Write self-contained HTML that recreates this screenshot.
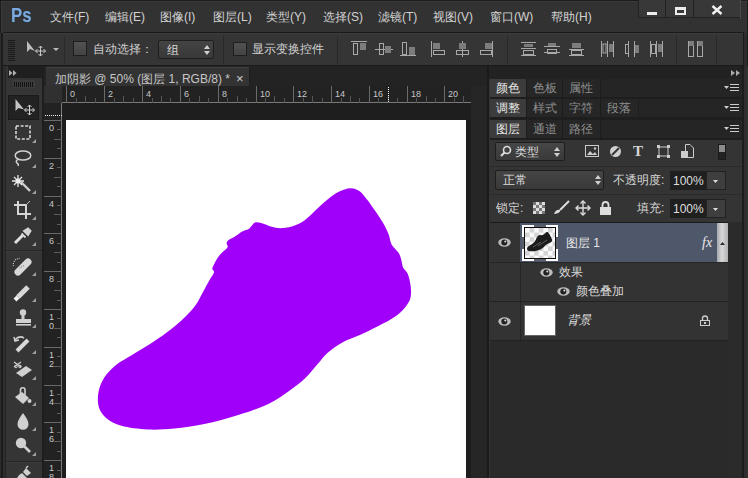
<!DOCTYPE html>
<html><head><meta charset="utf-8">
<style>
*{box-sizing:border-box;margin:0;padding:0}
html,body{width:748px;height:478px;overflow:hidden;background:#2b2b2b}
body{position:relative;font-family:"Liberation Sans",sans-serif;font-size:12px;color:#d0d0d0}
.a{position:absolute}
.t{position:absolute;white-space:nowrap;line-height:1}
.c{display:inline-block;width:12px;text-align:center}
svg{position:absolute;overflow:visible}
</style></head><body>
<div class="a" style="left:0px;top:0px;width:748px;height:33px;background:#323232;"></div>
<div class="a" style="left:0px;top:0px;width:748px;height:1px;background:#1c1c1c;"></div>
<div class="a" style="left:0px;top:0px;width:1px;height:33px;background:#1c1c1c;"></div>
<div class="a" style="left:1px;top:1px;width:746px;height:1px;background:#3a3a3a;"></div>
<div class="a" style="left:1px;top:1px;width:1px;height:32px;background:#3a3a3a;"></div>
<div class="a" style="left:747px;top:0px;width:1px;height:478px;background:#1c1c1c;"></div>
<div class="t" style="left:11px;top:4px;font-size:21px;font-weight:bold;color:#7aaade;transform:scaleX(0.8);transform-origin:0 0;text-shadow:0 0 1px #1d3a5a">Ps</div>
<div class="t" style="left:50px;top:11px;color:#d2d2d2"><span class="c">文</span><span class="c">件</span>(F)</div>
<div class="t" style="left:105px;top:11px;color:#d2d2d2"><span class="c">编</span><span class="c">辑</span>(E)</div>
<div class="t" style="left:160px;top:11px;color:#d2d2d2"><span class="c">图</span><span class="c">像</span>(I)</div>
<div class="t" style="left:213px;top:11px;color:#d2d2d2"><span class="c">图</span><span class="c">层</span>(L)</div>
<div class="t" style="left:266px;top:11px;color:#d2d2d2"><span class="c">类</span><span class="c">型</span>(Y)</div>
<div class="t" style="left:323px;top:11px;color:#d2d2d2"><span class="c">选</span><span class="c">择</span>(S)</div>
<div class="t" style="left:378px;top:11px;color:#d2d2d2"><span class="c">滤</span><span class="c">镜</span>(T)</div>
<div class="t" style="left:433px;top:11px;color:#d2d2d2"><span class="c">视</span><span class="c">图</span>(V)</div>
<div class="t" style="left:490px;top:11px;color:#d2d2d2"><span class="c">窗</span><span class="c">口</span>(W)</div>
<div class="t" style="left:551px;top:11px;color:#d2d2d2"><span class="c">帮</span><span class="c">助</span>(H)</div>
<div class="a" style="left:638px;top:0px;width:103px;height:18px;background:#222222;"></div>
<div class="a" style="left:740px;top:0px;width:1px;height:19px;background:#4a4a4a;"></div>
<div class="a" style="left:639px;top:0px;width:26px;height:17px;background:#383838;"></div>
<div class="a" style="left:666px;top:0px;width:27px;height:17px;background:#383838;"></div>
<div class="a" style="left:694px;top:0px;width:46px;height:17px;background:#383838;"></div>
<div class="a" style="left:647px;top:12px;width:10px;height:3px;background:#ececec;"></div>
<div class="a" style="left:675px;top:7px;width:11px;height:8px;background:transparent;border:2px solid #ececec;border-top-width:3px"></div>
<svg style="left:711px;top:5px" width="12" height="10"><path d="M1.5 1L10.5 9M10.5 1L1.5 9" stroke="#f0f0f0" stroke-width="2.4"/></svg>
<div class="a" style="left:3px;top:32px;width:741px;height:1px;background:#1a1a1a;"></div>
<div class="a" style="left:3px;top:33px;width:741px;height:33px;background:#353535;"></div>
<div class="a" style="left:3px;top:33px;width:741px;height:1px;background:#3c3c3c;"></div>
<div class="a" style="left:3px;top:65px;width:741px;height:1px;background:#1a1a1a;"></div>
<div class="a" style="left:743px;top:32px;width:1px;height:34px;background:#1a1a1a;"></div>
<div class="a" style="left:744px;top:33px;width:3px;height:445px;background:#2c2c2c;"></div>
<div class="a" style="left:3px;top:66px;width:741px;height:1px;background:#2a2a2a;"></div>
<div class="a" style="left:8px;top:40px;width:7px;height:1px;background:#1a1a1a;"></div>
<div class="a" style="left:8px;top:42px;width:7px;height:1px;background:#1a1a1a;"></div>
<div class="a" style="left:8px;top:44px;width:7px;height:1px;background:#1a1a1a;"></div>
<div class="a" style="left:8px;top:46px;width:7px;height:1px;background:#1a1a1a;"></div>
<div class="a" style="left:8px;top:48px;width:7px;height:1px;background:#1a1a1a;"></div>
<div class="a" style="left:8px;top:50px;width:7px;height:1px;background:#1a1a1a;"></div>
<div class="a" style="left:8px;top:52px;width:7px;height:1px;background:#1a1a1a;"></div>
<div class="a" style="left:8px;top:54px;width:7px;height:1px;background:#1a1a1a;"></div>
<div class="a" style="left:8px;top:56px;width:7px;height:1px;background:#1a1a1a;"></div>
<div class="a" style="left:8px;top:58px;width:7px;height:1px;background:#1a1a1a;"></div>
<div class="a" style="left:8px;top:60px;width:7px;height:1px;background:#1a1a1a;"></div>
<svg style="left:26px;top:41px" width="22" height="16"><path d="M1 0L1 11L4 8L9 10Z" fill="#bdbdbd"/><path d="M14.5 5V15M9.5 10H19.5" stroke="#c8c8c8" stroke-width="1"/><path d="M12.5 7L14.5 5L16.5 7M12.5 13L14.5 15L16.5 13M11.5 8L9.5 10L11.5 12M17.5 8L19.5 10L17.5 12" stroke="#c8c8c8" fill="none" stroke-width="1"/></svg>
<svg style="left:53px;top:48px" width="7" height="4"><path d="M0 0H6L3 3Z" fill="#bbb"/></svg>
<div class="a" style="left:64px;top:36px;width:1px;height:28px;background:#2a2a2a;"></div>
<div class="a" style="left:73px;top:41px;width:14px;height:15px;background:#4a4a4a;border:1px solid #1e1e1e;background:linear-gradient(#525252,#444)"></div>
<div class="t" style="left:93px;top:43px;color:#d0d0d0"><span class="c">自</span><span class="c">动</span><span class="c">选</span><span class="c">择</span><span class="c">：</span></div>
<div class="a" style="left:158px;top:40px;width:56px;height:19px;background:#3d3d3d;border:1px solid #1e1e1e;border-radius:2px;background:linear-gradient(#444,#383838)"></div>
<div class="t" style="left:167px;top:44px;color:#d8d8d8"><span class="c">组</span></div>
<svg style="left:204px;top:45px" width="7" height="10"><path d="M0 4L3 0L6 4ZM0 6L3 10L6 6Z" fill="#cfcfcf"/></svg>
<div class="a" style="left:223px;top:36px;width:1px;height:28px;background:#282828;"></div>
<div class="a" style="left:233px;top:42px;width:14px;height:14px;background:#4a4a4a;border:1px solid #1e1e1e;background:linear-gradient(#525252,#444)"></div>
<div class="t" style="left:252px;top:43px;color:#d0d0d0"><span class="c">显</span><span class="c">示</span><span class="c">变</span><span class="c">换</span><span class="c">控</span><span class="c">件</span></div>
<div class="a" style="left:337px;top:36px;width:1px;height:28px;background:#282828;"></div>
<svg style="left:351px;top:41px" width="18" height="16"><path d="M0 0.5H16" stroke="#a8a8a8" fill="none" stroke-width="1"/><rect x="2.5" y="2.5" width="4" height="11" stroke="#a8a8a8" fill="none" stroke-width="1"/><rect x="9" y="2" width="6" height="7" fill="#7c7c7c"/></svg>
<svg style="left:375px;top:41px" width="18" height="16"><path d="M0 8.5H18" stroke="#a8a8a8" fill="none" stroke-width="1"/><rect x="4.5" y="2.5" width="4" height="11" stroke="#a8a8a8" fill="none" stroke-width="1"/><rect x="10" y="5" width="6" height="7" fill="#7c7c7c"/></svg>
<svg style="left:400px;top:41px" width="18" height="16"><path d="M0 14.5H16" stroke="#a8a8a8" fill="none" stroke-width="1"/><rect x="2.5" y="1.5" width="4" height="12" stroke="#a8a8a8" fill="none" stroke-width="1"/><rect x="9" y="6" width="6" height="8" fill="#7c7c7c"/></svg>
<svg style="left:431px;top:41px" width="18" height="16"><path d="M0.5 0V16" stroke="#a8a8a8" fill="none" stroke-width="1"/><rect x="2.5" y="9.5" width="11" height="4" stroke="#a8a8a8" fill="none" stroke-width="1"/><rect x="2" y="2" width="7" height="6" fill="#7c7c7c"/></svg>
<svg style="left:456px;top:41px" width="18" height="16"><path d="M6.5 0V16" stroke="#a8a8a8" fill="none" stroke-width="1"/><rect x="0.5" y="9.5" width="12" height="4" stroke="#a8a8a8" fill="none" stroke-width="1"/><rect x="3" y="2" width="7" height="6" fill="#7c7c7c"/></svg>
<svg style="left:479px;top:41px" width="18" height="16"><path d="M13.5 0V16" stroke="#a8a8a8" fill="none" stroke-width="1"/><rect x="1.5" y="9.5" width="11" height="4" stroke="#a8a8a8" fill="none" stroke-width="1"/><rect x="6" y="2" width="7" height="6" fill="#7c7c7c"/></svg>
<div class="a" style="left:507px;top:36px;width:1px;height:28px;background:#282828;"></div>
<svg style="left:520px;top:41px" width="18" height="16"><path d="M1 1.5H16M1 7.5H16M1 14.5H16" stroke="#a8a8a8" fill="none" stroke-width="1"/><rect x="4" y="3" width="9" height="3" fill="#7c7c7c"/><rect x="3.5" y="9.5" width="10" height="4" stroke="#a8a8a8" fill="none" stroke-width="1"/></svg>
<svg style="left:544px;top:41px" width="18" height="16"><path d="M0 5.5H16M0 11.5H16" stroke="#a8a8a8" fill="none" stroke-width="1"/><rect x="4" y="2" width="8" height="3" fill="#7c7c7c"/><rect x="3.5" y="8.5" width="9" height="4" stroke="#a8a8a8" fill="none" stroke-width="1"/></svg>
<svg style="left:568px;top:41px" width="18" height="16"><path d="M1 8.5H16M1 14.5H16" stroke="#a8a8a8" fill="none" stroke-width="1"/><rect x="4" y="2" width="9" height="5" fill="#7c7c7c"/><rect x="3.5" y="9.5" width="10" height="4" stroke="#a8a8a8" fill="none" stroke-width="1"/></svg>
<svg style="left:600px;top:41px" width="18" height="16"><path d="M1.5 0V16M7.5 0V16M13.5 0V16" stroke="#a8a8a8" fill="none" stroke-width="1"/><rect x="3" y="3" width="3" height="9" stroke="#a8a8a8" fill="none" stroke-width="1"/><rect x="9" y="3" width="4" height="8" fill="#7c7c7c"/></svg>
<svg style="left:624px;top:41px" width="18" height="16"><path d="M4.5 0V16M10.5 0V16" stroke="#a8a8a8" fill="none" stroke-width="1"/><rect x="1.5" y="3.5" width="3" height="9" stroke="#a8a8a8" fill="none" stroke-width="1"/><rect x="11" y="4" width="4" height="8" fill="#7c7c7c"/></svg>
<svg style="left:649px;top:41px" width="18" height="16"><path d="M1.5 0V16M7.5 0V16M13.5 0V16" stroke="#a8a8a8" fill="none" stroke-width="1"/><rect x="2.5" y="3.5" width="4" height="9" stroke="#a8a8a8" fill="none" stroke-width="1"/><rect x="9" y="3" width="4" height="8" fill="#7c7c7c"/></svg>
<div class="a" style="left:676px;top:36px;width:1px;height:28px;background:#282828;"></div>
<svg style="left:687px;top:40px" width="18" height="18"><rect x="1.5" y="1.5" width="5" height="15" stroke="#a8a8a8" fill="none" stroke-width="1"/><rect x="10.5" y="1.5" width="5" height="15" stroke="#a8a8a8" fill="none" stroke-width="1"/><rect x="2" y="1" width="5" height="5" fill="#7c7c7c"/><rect x="11" y="1" width="5" height="5" fill="#7c7c7c"/></svg>
<div class="a" style="left:716px;top:36px;width:1px;height:28px;background:#282828;"></div>
<div class="a" style="left:0px;top:33px;width:2px;height:445px;background:#2c2c2c;"></div>
<div class="a" style="left:1px;top:33px;width:2px;height:445px;background:#1c1c1c;"></div>
<div class="a" style="left:3px;top:66px;width:3px;height:412px;background:#2e2e2e;"></div>
<div class="a" style="left:5px;top:66px;width:1px;height:412px;background:#262626;"></div>
<div class="a" style="left:6px;top:66px;width:36px;height:412px;background:#353535;"></div>
<div class="a" style="left:42px;top:66px;width:2px;height:412px;background:#1e1e1e;"></div>
<div class="a" style="left:8px;top:66px;width:34px;height:12px;background:#1f1f1f;"></div>
<svg style="left:9px;top:70px" width="8" height="6"><path d="M0 0L3.5 3L0 6ZM4 0L7.5 3L4 6Z" fill="#b0b0b0"/></svg>
<div class="a" style="left:13px;top:80px;width:22px;height:8px;background:#3b3b3b;"></div>
<div class="a" style="left:14px;top:82px;width:1px;height:5px;background:#141414;"></div>
<div class="a" style="left:16px;top:82px;width:1px;height:5px;background:#141414;"></div>
<div class="a" style="left:18px;top:82px;width:1px;height:5px;background:#141414;"></div>
<div class="a" style="left:20px;top:82px;width:1px;height:5px;background:#141414;"></div>
<div class="a" style="left:22px;top:82px;width:1px;height:5px;background:#141414;"></div>
<div class="a" style="left:24px;top:82px;width:1px;height:5px;background:#141414;"></div>
<div class="a" style="left:26px;top:82px;width:1px;height:5px;background:#141414;"></div>
<div class="a" style="left:28px;top:82px;width:1px;height:5px;background:#141414;"></div>
<div class="a" style="left:30px;top:82px;width:1px;height:5px;background:#141414;"></div>
<div class="a" style="left:32px;top:82px;width:1px;height:5px;background:#141414;"></div>
<div class="a" style="left:8px;top:95px;width:31px;height:25px;background:#222222;border:1px solid #1a1a1a"></div>
<svg style="left:15px;top:99px" width="22" height="17"><path d="M0.5 0L0.5 12L3.5 9L9 10.5Z" fill="#c4c4c4"/><path d="M14.5 6V16M9.5 11H19.5M12.5 8L14.5 6L16.5 8M12.5 14L14.5 16L16.5 14M11.5 9L9.5 11L11.5 13M17.5 9L19.5 11L17.5 13" stroke="#d0d0d0" fill="none" stroke-width="1"/></svg>
<svg style="left:12px;top:124px" width="20" height="18"><rect x="4" y="2" width="14" height="13" stroke="#d8d8d8" fill="none" stroke-width="1.6" stroke-dasharray="3 1.6"/></svg>
<svg style="left:32px;top:139px" width="4" height="4"><path d="M4 0V4H0Z" fill="#a0a0a0"/></svg>
<svg style="left:12px;top:149px" width="20" height="18"><ellipse cx="11" cy="6.5" rx="7.8" ry="4.6" stroke="#d0d0d0" fill="none" stroke-width="1.5"/><path d="M6 10.5Q3 12 5 14Q7 15 6 17" stroke="#d0d0d0" fill="none" stroke-width="1.5"/></svg>
<svg style="left:32px;top:164px" width="4" height="4"><path d="M4 0V4H0Z" fill="#a0a0a0"/></svg>
<svg style="left:12px;top:175px" width="20" height="18"><path d="M9 7L18 16" stroke="#d0d0d0" stroke-width="2.4"/><path d="M6 0V12M0 6H12M2 2L10 10M10 2L2 10" stroke="#e6e6e6" stroke-width="1.3"/><circle cx="6" cy="6" r="2.5" fill="#eee"/></svg>
<svg style="left:32px;top:190px" width="4" height="4"><path d="M4 0V4H0Z" fill="#a0a0a0"/></svg>
<svg style="left:12px;top:201px" width="20" height="18"><path d="M6 0V13H19M2 4H14V18" stroke="#d4d4d4" fill="none" stroke-width="2"/><path d="M14 4L18 0" stroke="#bbb" stroke-width="1"/></svg>
<svg style="left:32px;top:216px" width="4" height="4"><path d="M4 0V4H0Z" fill="#a0a0a0"/></svg>
<svg style="left:12px;top:227px" width="20" height="18"><path d="M3 16L11 8" stroke="#e0e0e0" stroke-width="3"/><path d="M9.5 6.5L13.5 10.5M12 4L16 1.5L18.5 4L16 8Z" fill="#d4d4d4" stroke="#d4d4d4" stroke-width="2"/></svg>
<svg style="left:32px;top:242px" width="4" height="4"><path d="M4 0V4H0Z" fill="#a0a0a0"/></svg>
<div class="a" style="left:6px;top:250px;width:36px;height:1px;background:#262626;"></div>
<div class="a" style="left:6px;top:251px;width:36px;height:1px;background:#3a3a3a;"></div>
<svg style="left:12px;top:257px" width="20" height="18"><path d="M6 15L16 5" stroke="#d8d8d8" stroke-width="7" stroke-linecap="round"/><path d="M7.5 11L12.5 8" stroke="#888" stroke-width="1.2" stroke-dasharray="1 1"/><path d="M1.5 9A6 6 0 0 1 8 1.5" stroke="#c8c8c8" stroke-dasharray="1 1.2" fill="none" stroke-width="1.2"/></svg>
<svg style="left:32px;top:272px" width="4" height="4"><path d="M4 0V4H0Z" fill="#a0a0a0"/></svg>
<svg style="left:12px;top:283px" width="20" height="18"><path d="M6 14L16 4" stroke="#d8d8d8" stroke-width="5"/><path d="M3 17L6 14" stroke="#f0f0f0" stroke-width="4"/></svg>
<svg style="left:32px;top:298px" width="4" height="4"><path d="M4 0V4H0Z" fill="#a0a0a0"/></svg>
<svg style="left:12px;top:309px" width="20" height="18"><circle cx="11" cy="3.5" r="3.2" fill="#d0d0d0"/><rect x="9.5" y="5" width="3" height="6" fill="#d0d0d0"/><rect x="4" y="10" width="15" height="4" fill="#d0d0d0"/><rect x="4" y="15" width="15" height="1.6" fill="#d0d0d0"/></svg>
<svg style="left:32px;top:324px" width="4" height="4"><path d="M4 0V4H0Z" fill="#a0a0a0"/></svg>
<svg style="left:12px;top:335px" width="20" height="18"><path d="M5 16L16 5" stroke="#d8d8d8" stroke-width="4"/><path d="M3 5Q7 0 12 3" stroke="#d0d0d0" fill="none" stroke-width="1.5"/><path d="M2 2L3 6L7 5" stroke="#d0d0d0" fill="none" stroke-width="1.5" stroke-width="1.2"/></svg>
<svg style="left:32px;top:350px" width="4" height="4"><path d="M4 0V4H0Z" fill="#a0a0a0"/></svg>
<svg style="left:12px;top:361px" width="20" height="18"><path d="M4 12L14 5L20 9L10 16Z" fill="#d0d0d0"/><path d="M2 1L9 6M2 6L9 1" stroke="#d0d0d0" stroke-width="1.3"/><circle cx="4" cy="5.5" r="1.3" stroke="#d0d0d0" fill="none"/><circle cx="8" cy="5.5" r="1.3" stroke="#d0d0d0" fill="none"/></svg>
<svg style="left:32px;top:376px" width="4" height="4"><path d="M4 0V4H0Z" fill="#a0a0a0"/></svg>
<svg style="left:12px;top:387px" width="20" height="18"><path d="M3 10L10 5L17 11L11 17Z" fill="#d0d0d0"/><path d="M8.5 7V3A2.2 2.2 0 0 1 13 3V8" stroke="#d0d0d0" fill="none" stroke-width="1.6"/><circle cx="17.5" cy="14" r="2" fill="#d0d0d0"/></svg>
<svg style="left:32px;top:402px" width="4" height="4"><path d="M4 0V4H0Z" fill="#a0a0a0"/></svg>
<svg style="left:12px;top:412px" width="20" height="18"><path d="M11 1Q5 9 5.5 12.5A5.5 5.2 0 0 0 16.5 12.5Q17 9 11 1Z" fill="#d0d0d0"/></svg>
<svg style="left:32px;top:427px" width="4" height="4"><path d="M4 0V4H0Z" fill="#a0a0a0"/></svg>
<svg style="left:12px;top:437px" width="20" height="18"><circle cx="9" cy="6" r="5.2" fill="#d0d0d0"/><path d="M12 9L18 15" stroke="#d0d0d0" stroke-width="2.6"/></svg>
<svg style="left:32px;top:452px" width="4" height="4"><path d="M4 0V4H0Z" fill="#a0a0a0"/></svg>
<div class="a" style="left:6px;top:461px;width:36px;height:1px;background:#262626;"></div>
<div class="a" style="left:6px;top:462px;width:36px;height:1px;background:#3a3a3a;"></div>
<svg style="left:12px;top:465px" width="20" height="18"><path d="M4 18Q4 11 10 8L15 13Q12 18 8 18Z" fill="#d0d0d0"/><path d="M11 7L14 3L19 8L15 11Z" fill="#d0d0d0"/><path d="M14 3L16 1" stroke="#d0d0d0" stroke-width="1.5"/></svg>
<svg style="left:32px;top:480px" width="4" height="4"><path d="M4 0V4H0Z" fill="#a0a0a0"/></svg>
<div class="a" style="left:44px;top:66px;width:445px;height:20px;background:#232323;"></div>
<div class="a" style="left:46px;top:67px;width:203px;height:19px;background:#333333;"></div>
<div class="a" style="left:46px;top:67px;width:203px;height:1px;background:#404040;"></div>
<div class="a" style="left:249px;top:67px;width:1px;height:19px;background:#1e1e1e;"></div>
<div class="t" style="left:55px;top:73px;color:#c6c6c6"><span class="c">加</span><span class="c">阴</span><span class="c">影</span> @ 50% (<span class="c">图</span><span class="c">层</span> 1, RGB/8) *</div>
<div class="t" style="left:236px;top:72px;color:#cfcfcf;font-size:13px">×</div>
<div class="a" style="left:44px;top:86px;width:427px;height:17px;background:#222222;"></div>
<div class="a" style="left:44px;top:103px;width:18px;height:375px;background:#222222;"></div>
<div class="a" style="left:44px;top:86px;width:18px;height:17px;background:#303030;"></div>
<svg style="left:0;top:0" width="748" height="478"><path d="M62 102.5H471" stroke="#7a7a7a"/><path d="M66.5 86V103" stroke="#6a6a6a"/><path d="M76.5 98V103" stroke="#555"/><path d="M85.5 96V103" stroke="#555"/><path d="M95.5 98V103" stroke="#555"/><text x="70" y="97" fill="#c8c8c8" font-size="9" font-family="Liberation Sans">0</text><path d="M104.5 86V103" stroke="#6a6a6a"/><path d="M114.5 98V103" stroke="#555"/><path d="M123.5 96V103" stroke="#555"/><path d="M133.5 98V103" stroke="#555"/><text x="108" y="97" fill="#c8c8c8" font-size="9" font-family="Liberation Sans">2</text><path d="M142.5 86V103" stroke="#6a6a6a"/><path d="M152.5 98V103" stroke="#555"/><path d="M161.5 96V103" stroke="#555"/><path d="M170.5 98V103" stroke="#555"/><text x="146" y="97" fill="#c8c8c8" font-size="9" font-family="Liberation Sans">4</text><path d="M180.5 86V103" stroke="#6a6a6a"/><path d="M189.5 98V103" stroke="#555"/><path d="M199.5 96V103" stroke="#555"/><path d="M208.5 98V103" stroke="#555"/><text x="184" y="97" fill="#c8c8c8" font-size="9" font-family="Liberation Sans">6</text><path d="M218.5 86V103" stroke="#6a6a6a"/><path d="M227.5 98V103" stroke="#555"/><path d="M237.5 96V103" stroke="#555"/><path d="M246.5 98V103" stroke="#555"/><text x="222" y="97" fill="#c8c8c8" font-size="9" font-family="Liberation Sans">8</text><path d="M256.5 86V103" stroke="#6a6a6a"/><path d="M265.5 98V103" stroke="#555"/><path d="M274.5 96V103" stroke="#555"/><path d="M284.5 98V103" stroke="#555"/><text x="260" y="97" fill="#c8c8c8" font-size="9" font-family="Liberation Sans">10</text><path d="M293.5 86V103" stroke="#6a6a6a"/><path d="M303.5 98V103" stroke="#555"/><path d="M312.5 96V103" stroke="#555"/><path d="M322.5 98V103" stroke="#555"/><text x="297" y="97" fill="#c8c8c8" font-size="9" font-family="Liberation Sans">12</text><path d="M331.5 86V103" stroke="#6a6a6a"/><path d="M341.5 98V103" stroke="#555"/><path d="M350.5 96V103" stroke="#555"/><path d="M359.5 98V103" stroke="#555"/><text x="335" y="97" fill="#c8c8c8" font-size="9" font-family="Liberation Sans">14</text><path d="M369.5 86V103" stroke="#6a6a6a"/><path d="M378.5 98V103" stroke="#555"/><path d="M388.5 96V103" stroke="#555"/><path d="M397.5 98V103" stroke="#555"/><text x="373" y="97" fill="#c8c8c8" font-size="9" font-family="Liberation Sans">16</text><path d="M407.5 86V103" stroke="#6a6a6a"/><path d="M416.5 98V103" stroke="#555"/><path d="M426.5 96V103" stroke="#555"/><path d="M435.5 98V103" stroke="#555"/><text x="411" y="97" fill="#c8c8c8" font-size="9" font-family="Liberation Sans">18</text><path d="M444.5 86V103" stroke="#6a6a6a"/><path d="M454.5 98V103" stroke="#555"/><path d="M463.5 96V103" stroke="#555"/><text x="448" y="97" fill="#c8c8c8" font-size="9" font-family="Liberation Sans">20</text><path d="M388.5 87V103" stroke="#eee" stroke-dasharray="1 1"/><path d="M61.5 103V478" stroke="#7a7a7a"/><path d="M44 120.5H62" stroke="#6a6a6a"/><path d="M57 129.5H62" stroke="#5c5c5c"/><path d="M54 139.5H62" stroke="#5c5c5c"/><path d="M57 148.5H62" stroke="#5c5c5c"/><text x="49" y="131" fill="#c8c8c8" font-size="9" font-family="Liberation Sans">0</text><path d="M44 158.5H62" stroke="#6a6a6a"/><path d="M57 167.5H62" stroke="#5c5c5c"/><path d="M54 177.5H62" stroke="#5c5c5c"/><path d="M57 186.5H62" stroke="#5c5c5c"/><text x="49" y="169" fill="#c8c8c8" font-size="9" font-family="Liberation Sans">2</text><path d="M44 196.5H62" stroke="#6a6a6a"/><path d="M57 205.5H62" stroke="#5c5c5c"/><path d="M54 214.5H62" stroke="#5c5c5c"/><path d="M57 224.5H62" stroke="#5c5c5c"/><text x="49" y="207" fill="#c8c8c8" font-size="9" font-family="Liberation Sans">4</text><path d="M44 233.5H62" stroke="#6a6a6a"/><path d="M57 243.5H62" stroke="#5c5c5c"/><path d="M54 252.5H62" stroke="#5c5c5c"/><path d="M57 262.5H62" stroke="#5c5c5c"/><text x="49" y="244" fill="#c8c8c8" font-size="9" font-family="Liberation Sans">6</text><path d="M44 271.5H62" stroke="#6a6a6a"/><path d="M57 281.5H62" stroke="#5c5c5c"/><path d="M54 290.5H62" stroke="#5c5c5c"/><path d="M57 300.5H62" stroke="#5c5c5c"/><text x="49" y="282" fill="#c8c8c8" font-size="9" font-family="Liberation Sans">8</text><path d="M44 309.5H62" stroke="#6a6a6a"/><path d="M57 318.5H62" stroke="#5c5c5c"/><path d="M54 328.5H62" stroke="#5c5c5c"/><path d="M57 337.5H62" stroke="#5c5c5c"/><text x="49" y="320" fill="#c8c8c8" font-size="9" font-family="Liberation Sans">1</text><text x="49" y="329" fill="#c8c8c8" font-size="9" font-family="Liberation Sans">0</text><path d="M44 347.5H62" stroke="#6a6a6a"/><path d="M57 356.5H62" stroke="#5c5c5c"/><path d="M54 366.5H62" stroke="#5c5c5c"/><path d="M57 375.5H62" stroke="#5c5c5c"/><text x="49" y="358" fill="#c8c8c8" font-size="9" font-family="Liberation Sans">1</text><text x="49" y="367" fill="#c8c8c8" font-size="9" font-family="Liberation Sans">2</text><path d="M44 385.5H62" stroke="#6a6a6a"/><path d="M57 394.5H62" stroke="#5c5c5c"/><path d="M54 403.5H62" stroke="#5c5c5c"/><path d="M57 413.5H62" stroke="#5c5c5c"/><text x="49" y="396" fill="#c8c8c8" font-size="9" font-family="Liberation Sans">1</text><text x="49" y="405" fill="#c8c8c8" font-size="9" font-family="Liberation Sans">4</text><path d="M44 422.5H62" stroke="#6a6a6a"/><path d="M57 432.5H62" stroke="#5c5c5c"/><path d="M54 441.5H62" stroke="#5c5c5c"/><path d="M57 451.5H62" stroke="#5c5c5c"/><text x="49" y="433" fill="#c8c8c8" font-size="9" font-family="Liberation Sans">1</text><text x="49" y="442" fill="#c8c8c8" font-size="9" font-family="Liberation Sans">6</text><path d="M44 460.5H62" stroke="#6a6a6a"/><path d="M57 470.5H62" stroke="#5c5c5c"/><path d="M54 479.5H62" stroke="#5c5c5c"/><path d="M57 489.5H62" stroke="#5c5c5c"/><text x="49" y="471" fill="#c8c8c8" font-size="9" font-family="Liberation Sans">1</text><text x="49" y="480" fill="#c8c8c8" font-size="9" font-family="Liberation Sans">8</text><path d="M45 115.5H62" stroke="#eee" stroke-dasharray="1 1"/></svg>
<div class="a" style="left:62px;top:103px;width:409px;height:375px;background:#1e1e1e;"></div>
<div class="a" style="left:66px;top:120px;width:400px;height:358px;background:#ffffff;"></div>
<svg style="left:0;top:0" width="748" height="478"><defs><filter id="bl" x="-5%" y="-5%" width="110%" height="110%"><feGaussianBlur stdDeviation="0.7"/></filter></defs><path fill="#a000f9" filter="url(#bl)" d="M98.8 406.9 C97.5 402.5 97.6 396.8 98.5 392.0 C99.4 387.2 101.1 382.5 104.0 378.0 C106.9 373.5 111.3 368.8 116.0 365.0 C120.7 361.2 126.3 358.5 132.0 355.0 C137.7 351.5 144.3 347.7 150.0 344.0 C155.7 340.3 160.7 337.0 166.0 333.0 C171.3 329.0 177.2 324.5 182.0 320.0 C186.8 315.5 191.5 310.7 195.0 306.0 C198.5 301.3 200.7 296.2 203.0 292.0 C205.3 287.8 207.2 284.2 209.0 281.0 C210.8 277.8 213.4 274.5 214.0 272.5 C214.6 270.5 212.4 270.2 212.3 269.0 C212.2 267.8 212.7 267.2 213.5 265.5 C214.3 263.8 215.9 260.6 217.2 258.6 C218.5 256.6 219.7 255.2 221.4 253.3 C223.1 251.5 226.6 249.2 227.5 247.5 C228.4 245.8 226.3 244.3 226.6 243.0 C226.8 241.7 227.6 240.8 229.0 239.7 C230.4 238.6 232.8 237.8 235.0 236.4 C237.2 235.0 240.0 232.6 242.3 231.4 C244.6 230.2 247.0 230.0 248.6 229.0 C250.2 228.0 250.9 226.6 252.0 225.5 C253.1 224.4 253.5 223.0 255.0 222.6 C256.5 222.2 258.3 222.3 261.1 223.0 C263.9 223.7 268.5 225.9 271.6 226.8 C274.8 227.7 276.6 228.2 280.0 228.2 C283.4 228.1 287.8 227.9 292.0 226.5 C296.2 225.1 300.7 223.1 305.0 220.0 C309.3 216.9 313.8 211.7 318.0 208.0 C322.2 204.3 326.5 200.3 330.0 197.6 C333.5 194.9 335.4 193.3 338.8 191.7 C342.2 190.1 347.1 188.3 350.5 188.2 C353.9 188.1 356.6 189.3 359.3 191.1 C362.0 192.9 364.2 196.0 366.6 199.0 C369.1 202.0 371.3 205.4 374.0 209.3 C376.7 213.2 380.4 218.3 382.8 222.5 C385.2 226.7 387.1 230.5 388.6 234.2 C390.1 237.9 389.9 241.3 391.6 244.5 C393.3 247.7 397.2 250.4 398.9 253.3 C400.6 256.2 401.1 259.6 401.8 262.0 C402.5 264.4 402.3 266.0 403.3 268.0 C404.3 270.0 406.5 270.9 407.7 273.8 C408.9 276.7 410.1 281.6 410.6 285.5 C411.1 289.4 411.3 293.9 410.6 297.3 C409.9 300.7 408.4 303.1 406.2 306.0 C404.0 308.9 401.2 312.0 397.4 314.9 C393.6 317.8 389.5 320.1 383.5 323.3 C377.5 326.5 368.4 331.2 361.6 334.3 C354.8 337.4 348.6 339.1 342.8 342.2 C337.1 345.3 331.3 349.5 327.1 353.2 C322.9 356.9 321.4 359.9 317.7 364.1 C314.0 368.3 309.8 373.9 305.1 378.3 C300.4 382.8 295.5 386.5 289.4 390.8 C283.3 395.1 276.9 400.0 268.4 404.0 C259.9 408.0 248.9 411.7 238.2 415.0 C227.5 418.3 215.0 421.8 204.3 424.0 C193.6 426.2 183.6 427.6 174.2 428.5 C164.8 429.4 156.6 429.9 147.8 429.5 C139.0 429.1 128.3 427.7 121.4 425.8 C114.5 423.9 110.2 421.4 106.4 418.2 C102.6 415.0 100.1 411.3 98.8 406.9Z"/></svg>
<div class="a" style="left:471px;top:86px;width:18px;height:392px;background:#262626;"></div>
<div class="a" style="left:487px;top:66px;width:2px;height:412px;background:#1a1a1a;"></div>
<div class="a" style="left:489px;top:66px;width:259px;height:412px;background:#343434;"></div>
<div class="a" style="left:489px;top:66px;width:254px;height:13px;background:#222;"></div>
<svg style="left:731px;top:70px" width="9" height="6"><path d="M0 0L4 3L0 6ZM5 0L9 3L5 6Z" fill="#aaa"/></svg>
<div class="a" style="left:490px;top:79px;width:253px;height:18px;background:#252525;"></div>
<div class="a" style="left:490px;top:79px;width:36px;height:18px;background:#3c3c3c;"></div>
<div class="t" style="left:496px;top:82px;color:#e6e6e6"><span class="c">颜</span><span class="c">色</span></div>
<div class="a" style="left:526px;top:79px;width:1px;height:18px;background:#1c1c1c;"></div>
<div class="a" style="left:527px;top:79px;width:35px;height:18px;background:#262626;"></div>
<div class="t" style="left:533px;top:82px;color:#8e8e8e"><span class="c">色</span><span class="c">板</span></div>
<div class="a" style="left:562px;top:79px;width:1px;height:18px;background:#1c1c1c;"></div>
<div class="a" style="left:563px;top:79px;width:37px;height:18px;background:#262626;"></div>
<div class="t" style="left:569px;top:82px;color:#8e8e8e"><span class="c">属</span><span class="c">性</span></div>
<div class="a" style="left:600px;top:79px;width:1px;height:18px;background:#1c1c1c;"></div>
<svg style="left:724px;top:84px" width="16" height="8"><path d="M0 2H5L2.5 5Z" fill="#ccc"/><path d="M6 0.5H15M6 3.5H15M6 6.5H15" stroke="#ccc"/></svg>
<div class="a" style="left:490px;top:97px;width:253px;height:2px;background:#1e1e1e;"></div>
<div class="a" style="left:490px;top:99px;width:253px;height:18px;background:#252525;"></div>
<div class="a" style="left:490px;top:99px;width:36px;height:18px;background:#3c3c3c;"></div>
<div class="t" style="left:496px;top:102px;color:#e6e6e6"><span class="c">调</span><span class="c">整</span></div>
<div class="a" style="left:526px;top:99px;width:1px;height:18px;background:#1c1c1c;"></div>
<div class="a" style="left:527px;top:99px;width:35px;height:18px;background:#262626;"></div>
<div class="t" style="left:533px;top:102px;color:#8e8e8e"><span class="c">样</span><span class="c">式</span></div>
<div class="a" style="left:562px;top:99px;width:1px;height:18px;background:#1c1c1c;"></div>
<div class="a" style="left:563px;top:99px;width:37px;height:18px;background:#262626;"></div>
<div class="t" style="left:569px;top:102px;color:#8e8e8e"><span class="c">字</span><span class="c">符</span></div>
<div class="a" style="left:600px;top:99px;width:1px;height:18px;background:#1c1c1c;"></div>
<div class="a" style="left:601px;top:99px;width:37px;height:18px;background:#262626;"></div>
<div class="t" style="left:607px;top:102px;color:#8e8e8e"><span class="c">段</span><span class="c">落</span></div>
<div class="a" style="left:638px;top:99px;width:1px;height:18px;background:#1c1c1c;"></div>
<svg style="left:724px;top:104px" width="16" height="8"><path d="M0 2H5L2.5 5Z" fill="#ccc"/><path d="M6 0.5H15M6 3.5H15M6 6.5H15" stroke="#ccc"/></svg>
<div class="a" style="left:490px;top:117px;width:253px;height:3px;background:#1e1e1e;"></div>
<div class="a" style="left:490px;top:120px;width:253px;height:18px;background:#252525;"></div>
<div class="a" style="left:490px;top:120px;width:36px;height:18px;background:#3c3c3c;"></div>
<div class="t" style="left:496px;top:123px;color:#e6e6e6"><span class="c">图</span><span class="c">层</span></div>
<div class="a" style="left:526px;top:120px;width:1px;height:18px;background:#1c1c1c;"></div>
<div class="a" style="left:527px;top:120px;width:35px;height:18px;background:#262626;"></div>
<div class="t" style="left:533px;top:123px;color:#8e8e8e"><span class="c">通</span><span class="c">道</span></div>
<div class="a" style="left:562px;top:120px;width:1px;height:18px;background:#1c1c1c;"></div>
<div class="a" style="left:563px;top:120px;width:37px;height:18px;background:#262626;"></div>
<div class="t" style="left:569px;top:123px;color:#8e8e8e"><span class="c">路</span><span class="c">径</span></div>
<div class="a" style="left:600px;top:120px;width:1px;height:18px;background:#1c1c1c;"></div>
<svg style="left:724px;top:125px" width="16" height="8"><path d="M0 2H5L2.5 5Z" fill="#ccc"/><path d="M6 0.5H15M6 3.5H15M6 6.5H15" stroke="#ccc"/></svg>
<div class="a" style="left:490px;top:138px;width:253px;height:2px;background:#1e1e1e;"></div>
<div class="a" style="left:490px;top:140px;width:253px;height:26px;background:#343434;"></div>
<div class="a" style="left:495px;top:142px;width:70px;height:19px;background:#3e3e3e;border:1px solid #1e1e1e;border-radius:2px;background:linear-gradient(#474747,#393939)"></div>
<svg style="left:500px;top:145px" width="12" height="12"><circle cx="7" cy="5" r="3.5" stroke="#ddd" stroke-width="1.6" fill="none"/><path d="M4.5 7.5L1 11" stroke="#ddd" stroke-width="2"/></svg>
<div class="t" style="left:515px;top:146px;color:#dcdcdc"><span class="c">类</span><span class="c">型</span></div>
<svg style="left:554px;top:147px" width="7" height="10"><path d="M0 4L3 0L6 4ZM0 6L3 10L6 6Z" fill="#cfcfcf"/></svg>
<svg style="left:585px;top:145px" width="14" height="12"><rect x="0.5" y="0.5" width="13" height="11" stroke="#ccc" fill="none"/><path d="M2 10L5 6L8 9L10 7L12 10Z" fill="#ccc"/><circle cx="10" cy="3.5" r="1.2" fill="#ccc"/></svg>
<svg style="left:609px;top:145px" width="13" height="13"><circle cx="6.5" cy="6.5" r="5.5" fill="#cfcfcf"/><path d="M3 10L10 3" stroke="#333" stroke-width="2"/></svg>
<div class="t" style="left:633px;top:144px;font-family:Liberation Serif;font-size:15px;font-weight:bold;color:#d5d5d5">T</div>
<svg style="left:657px;top:145px" width="13" height="13"><rect x="2" y="2" width="9" height="9" stroke="#ccc" fill="none"/><rect x="0" y="0" width="3" height="3" fill="#ccc"/><rect x="10" y="0" width="3" height="3" fill="#ccc"/><rect x="0" y="10" width="3" height="3" fill="#ccc"/><rect x="10" y="10" width="3" height="3" fill="#ccc"/></svg>
<svg style="left:681px;top:144px" width="13" height="14"><path d="M4.5 0.5H9L12.5 4V13.5H4.5Z" stroke="#ccc" fill="none"/><rect x="0" y="7" width="7" height="7" fill="#ccc"/></svg>
<div class="a" style="left:718px;top:144px;width:8px;height:16px;background:#222;border:1px solid #1a1a1a"></div>
<div class="a" style="left:719px;top:145px;width:6px;height:7px;background:#8a8a8a;"></div>
<div class="a" style="left:490px;top:166px;width:253px;height:1px;background:#2a2a2a;"></div>
<div class="a" style="left:495px;top:170px;width:109px;height:20px;background:#3e3e3e;border:1px solid #1e1e1e;border-radius:2px;background:linear-gradient(#454545,#393939)"></div>
<div class="t" style="left:503px;top:174px;color:#dcdcdc"><span class="c">正</span><span class="c">常</span></div>
<svg style="left:595px;top:175px" width="7" height="10"><path d="M0 4L3 0L6 4ZM0 6L3 10L6 6Z" fill="#cfcfcf"/></svg>
<div class="t" style="left:613px;top:174px;color:#d6d6d6"><span class="c">不</span><span class="c">透</span><span class="c">明</span><span class="c">度</span>:</div>
<div class="a" style="left:670px;top:171px;width:36px;height:19px;background:#1f1f1f;"></div>
<div class="t" style="left:673px;top:175px;color:#dedede">100%</div>
<div class="a" style="left:706px;top:171px;width:20px;height:19px;background:#3e3e3e;border:1px solid #222"></div>
<svg style="left:713px;top:180px" width="5" height="3"><path d="M0 0H5L2.5 3Z" fill="#ddd"/></svg>
<div class="a" style="left:490px;top:194px;width:253px;height:1px;background:#2a2a2a;"></div>
<div class="t" style="left:496px;top:202px;color:#d6d6d6"><span class="c">锁</span><span class="c">定</span>:</div>
<svg style="left:533px;top:202px" width="12" height="12"><rect width="12" height="12" fill="#ddd"/><path d="M0 0h3v3H0zM6 0h3v3H6zM3 3h3v3H3zM9 3h3v3H9zM0 6h3v3H0zM6 6h3v3H6zM3 9h3v3H3zM9 9h3v3H9z" fill="#777"/></svg>
<svg style="left:553px;top:201px" width="17" height="14"><path d="M16 0L7 9" stroke="#ddd" stroke-width="2"/><path d="M1 13Q3 8 7 9Q8 12 1 13Z" fill="#ddd"/></svg>
<svg style="left:576px;top:201px" width="14" height="14"><path d="M7 0V14M0 7H14" stroke="#ddd" stroke-width="1.4"/><path d="M4.5 2.5L7 0L9.5 2.5M4.5 11.5L7 14L9.5 11.5M2.5 4.5L0 7L2.5 9.5M11.5 4.5L14 7L11.5 9.5" stroke="#ddd" fill="none" stroke-width="1.4"/></svg>
<svg style="left:600px;top:201px" width="11" height="14"><path d="M2.5 6V4A3 3 0 0 1 8.5 4V6" stroke="#ddd" stroke-width="1.8" fill="none"/><rect x="0" y="6" width="11" height="8" fill="#ddd"/></svg>
<div class="t" style="left:637px;top:202px;color:#d6d6d6"><span class="c">填</span><span class="c">充</span>:</div>
<div class="a" style="left:670px;top:199px;width:36px;height:19px;background:#1f1f1f;"></div>
<div class="t" style="left:673px;top:203px;color:#dedede">100%</div>
<div class="a" style="left:706px;top:199px;width:20px;height:19px;background:#3e3e3e;border:1px solid #222"></div>
<svg style="left:713px;top:208px" width="5" height="3"><path d="M0 0H5L2.5 3Z" fill="#ddd"/></svg>
<div class="a" style="left:490px;top:222px;width:238px;height:256px;background:#2a2a2a;"></div>
<div class="a" style="left:490px;top:222px;width:238px;height:1px;background:#1c1c1c;"></div>
<div class="a" style="left:490px;top:223px;width:30px;height:39px;background:#333333;"></div>
<div class="a" style="left:520px;top:223px;width:208px;height:39px;background:#4f576a;"></div>
<div class="a" style="left:717px;top:223px;width:11px;height:39px;background:#bdbdbd;background:linear-gradient(90deg,#a4a8b0,#d8d8d8 45%,#b0b0b4)"></div>
<svg style="left:720px;top:242px" width="5" height="3"><path d="M0 3L2.5 0L5 3Z" fill="#2a2a2a"/></svg>
<div class="t" style="left:702px;top:236px;font-style:italic;font-family:Liberation Serif;font-size:14px;color:#e8e8e8">fx</div>
<svg style="left:498px;top:238px" width="13" height="9"><ellipse cx="6.5" cy="4.5" rx="6.2" ry="4.2" fill="#bdbdbd"/><circle cx="6.3" cy="4.5" r="3" fill="#222"/><circle cx="7.3" cy="3.4" r="1" fill="#e0e0e0"/></svg>
<div class="a" style="left:522px;top:225px;width:36px;height:36px;background:#5a5f6a;"></div>
<div class="a" style="left:522px;top:225px;width:12px;height:2px;background:#ffffff;"></div>
<div class="a" style="left:522px;top:225px;width:2px;height:12px;background:#ffffff;"></div>
<div class="a" style="left:546px;top:225px;width:12px;height:2px;background:#ffffff;"></div>
<div class="a" style="left:556px;top:225px;width:2px;height:12px;background:#ffffff;"></div>
<div class="a" style="left:522px;top:259px;width:12px;height:2px;background:#ffffff;"></div>
<div class="a" style="left:522px;top:249px;width:2px;height:12px;background:#ffffff;"></div>
<div class="a" style="left:546px;top:259px;width:12px;height:2px;background:#ffffff;"></div>
<div class="a" style="left:556px;top:249px;width:2px;height:12px;background:#ffffff;"></div>
<div class="a" style="left:524px;top:227px;width:32px;height:32px;background:#0e0e0e;"></div>
<svg style="left:525px;top:228px;width:30px;height:30px;overflow:hidden" width="30" height="30"><rect width="30" height="30" fill="#fafafa"/><rect x="0.0" y="4.6" width="4.6" height="4.6" fill="#d4d4d4"/><rect x="0.0" y="13.8" width="4.6" height="4.6" fill="#d4d4d4"/><rect x="0.0" y="23.0" width="4.6" height="4.6" fill="#d4d4d4"/><rect x="4.6" y="0.0" width="4.6" height="4.6" fill="#d4d4d4"/><rect x="4.6" y="9.2" width="4.6" height="4.6" fill="#d4d4d4"/><rect x="4.6" y="18.4" width="4.6" height="4.6" fill="#d4d4d4"/><rect x="4.6" y="27.6" width="4.6" height="4.6" fill="#d4d4d4"/><rect x="9.2" y="4.6" width="4.6" height="4.6" fill="#d4d4d4"/><rect x="9.2" y="13.8" width="4.6" height="4.6" fill="#d4d4d4"/><rect x="9.2" y="23.0" width="4.6" height="4.6" fill="#d4d4d4"/><rect x="13.8" y="0.0" width="4.6" height="4.6" fill="#d4d4d4"/><rect x="13.8" y="9.2" width="4.6" height="4.6" fill="#d4d4d4"/><rect x="13.8" y="18.4" width="4.6" height="4.6" fill="#d4d4d4"/><rect x="13.8" y="27.6" width="4.6" height="4.6" fill="#d4d4d4"/><rect x="18.4" y="4.6" width="4.6" height="4.6" fill="#d4d4d4"/><rect x="18.4" y="13.8" width="4.6" height="4.6" fill="#d4d4d4"/><rect x="18.4" y="23.0" width="4.6" height="4.6" fill="#d4d4d4"/><rect x="23.0" y="0.0" width="4.6" height="4.6" fill="#d4d4d4"/><rect x="23.0" y="9.2" width="4.6" height="4.6" fill="#d4d4d4"/><rect x="23.0" y="18.4" width="4.6" height="4.6" fill="#d4d4d4"/><rect x="23.0" y="27.6" width="4.6" height="4.6" fill="#d4d4d4"/><rect x="27.6" y="4.6" width="4.6" height="4.6" fill="#d4d4d4"/><rect x="27.6" y="13.8" width="4.6" height="4.6" fill="#d4d4d4"/><rect x="27.6" y="23.0" width="4.6" height="4.6" fill="#d4d4d4"/><g transform="translate(-5.8,-11) scale(0.08)"><path fill="#1c1c1c" d="M98.8 406.9 C97.5 402.5 97.6 396.8 98.5 392.0 C99.4 387.2 101.1 382.5 104.0 378.0 C106.9 373.5 111.3 368.8 116.0 365.0 C120.7 361.2 126.3 358.5 132.0 355.0 C137.7 351.5 144.3 347.7 150.0 344.0 C155.7 340.3 160.7 337.0 166.0 333.0 C171.3 329.0 177.2 324.5 182.0 320.0 C186.8 315.5 191.5 310.7 195.0 306.0 C198.5 301.3 200.7 296.2 203.0 292.0 C205.3 287.8 207.2 284.2 209.0 281.0 C210.8 277.8 213.4 274.5 214.0 272.5 C214.6 270.5 212.4 270.2 212.3 269.0 C212.2 267.8 212.7 267.2 213.5 265.5 C214.3 263.8 215.9 260.6 217.2 258.6 C218.5 256.6 219.7 255.2 221.4 253.3 C223.1 251.5 226.6 249.2 227.5 247.5 C228.4 245.8 226.3 244.3 226.6 243.0 C226.8 241.7 227.6 240.8 229.0 239.7 C230.4 238.6 232.8 237.8 235.0 236.4 C237.2 235.0 240.0 232.6 242.3 231.4 C244.6 230.2 247.0 230.0 248.6 229.0 C250.2 228.0 250.9 226.6 252.0 225.5 C253.1 224.4 253.5 223.0 255.0 222.6 C256.5 222.2 258.3 222.3 261.1 223.0 C263.9 223.7 268.5 225.9 271.6 226.8 C274.8 227.7 276.6 228.2 280.0 228.2 C283.4 228.1 287.8 227.9 292.0 226.5 C296.2 225.1 300.7 223.1 305.0 220.0 C309.3 216.9 313.8 211.7 318.0 208.0 C322.2 204.3 326.5 200.3 330.0 197.6 C333.5 194.9 335.4 193.3 338.8 191.7 C342.2 190.1 347.1 188.3 350.5 188.2 C353.9 188.1 356.6 189.3 359.3 191.1 C362.0 192.9 364.2 196.0 366.6 199.0 C369.1 202.0 371.3 205.4 374.0 209.3 C376.7 213.2 380.4 218.3 382.8 222.5 C385.2 226.7 387.1 230.5 388.6 234.2 C390.1 237.9 389.9 241.3 391.6 244.5 C393.3 247.7 397.2 250.4 398.9 253.3 C400.6 256.2 401.1 259.6 401.8 262.0 C402.5 264.4 402.3 266.0 403.3 268.0 C404.3 270.0 406.5 270.9 407.7 273.8 C408.9 276.7 410.1 281.6 410.6 285.5 C411.1 289.4 411.3 293.9 410.6 297.3 C409.9 300.7 408.4 303.1 406.2 306.0 C404.0 308.9 401.2 312.0 397.4 314.9 C393.6 317.8 389.5 320.1 383.5 323.3 C377.5 326.5 368.4 331.2 361.6 334.3 C354.8 337.4 348.6 339.1 342.8 342.2 C337.1 345.3 331.3 349.5 327.1 353.2 C322.9 356.9 321.4 359.9 317.7 364.1 C314.0 368.3 309.8 373.9 305.1 378.3 C300.4 382.8 295.5 386.5 289.4 390.8 C283.3 395.1 276.9 400.0 268.4 404.0 C259.9 408.0 248.9 411.7 238.2 415.0 C227.5 418.3 215.0 421.8 204.3 424.0 C193.6 426.2 183.6 427.6 174.2 428.5 C164.8 429.4 156.6 429.9 147.8 429.5 C139.0 429.1 128.3 427.7 121.4 425.8 C114.5 423.9 110.2 421.4 106.4 418.2 C102.6 415.0 100.1 411.3 98.8 406.9Z"/></g><path d="M8 19L16 14M13 18L22 12" stroke="#777" stroke-width="0.7"/></svg>
<div class="t" style="left:566px;top:237px;color:#e8e8e8"><span class="c">图</span><span class="c">层</span> 1</div>
<div class="a" style="left:490px;top:263px;width:238px;height:38px;background:#333333;"></div>
<div class="a" style="left:490px;top:262px;width:238px;height:1px;background:#262626;"></div>
<div class="a" style="left:520px;top:263px;width:1px;height:39px;background:#242424;"></div>
<svg style="left:540px;top:268px" width="13" height="9"><ellipse cx="6.5" cy="4.5" rx="6.2" ry="4.2" fill="#bdbdbd"/><circle cx="6.3" cy="4.5" r="3" fill="#222"/><circle cx="7.3" cy="3.4" r="1" fill="#e0e0e0"/></svg>
<div class="t" style="left:559px;top:266px;color:#d8d8d8"><span class="c">效</span><span class="c">果</span></div>
<svg style="left:557px;top:287px" width="13" height="9"><ellipse cx="6.5" cy="4.5" rx="6.2" ry="4.2" fill="#bdbdbd"/><circle cx="6.3" cy="4.5" r="3" fill="#222"/><circle cx="7.3" cy="3.4" r="1" fill="#e0e0e0"/></svg>
<div class="t" style="left:576px;top:285px;color:#d8d8d8"><span class="c">颜</span><span class="c">色</span><span class="c">叠</span><span class="c">加</span></div>
<div class="a" style="left:490px;top:301px;width:238px;height:1px;background:#222;"></div>
<div class="a" style="left:490px;top:302px;width:238px;height:38px;background:#333333;"></div>
<div class="a" style="left:520px;top:302px;width:1px;height:38px;background:#262626;"></div>
<svg style="left:498px;top:317px" width="13" height="9"><ellipse cx="6.5" cy="4.5" rx="6.2" ry="4.2" fill="#bdbdbd"/><circle cx="6.3" cy="4.5" r="3" fill="#222"/><circle cx="7.3" cy="3.4" r="1" fill="#e0e0e0"/></svg>
<div class="a" style="left:524px;top:305px;width:32px;height:31px;background:#fff;border:1px solid #666"></div>
<div class="t" style="left:568px;top:314px;transform:skewX(-14deg);color:#e0e0e0"><span class="c">背</span><span class="c">景</span></div>
<svg style="left:700px;top:315px" width="10" height="11"><path d="M2.5 5V3.5A2.5 2.5 0 0 1 7.5 3.5V5" stroke="#ccc" stroke-width="1.3" fill="none"/><rect x="0.5" y="5.5" width="9" height="5" stroke="#ccc" fill="none"/><rect x="4" y="7" width="2" height="2" fill="#ccc"/></svg>
<div class="a" style="left:490px;top:340px;width:238px;height:1px;background:#222;"></div>
<div class="a" style="left:728px;top:222px;width:14px;height:256px;background:#2b2b2b;"></div>
<div class="a" style="left:742px;top:66px;width:2px;height:412px;background:#1c1c1c;"></div>
<div class="a" style="left:744px;top:66px;width:3px;height:412px;background:#2e2e2e;"></div>
</body></html>
